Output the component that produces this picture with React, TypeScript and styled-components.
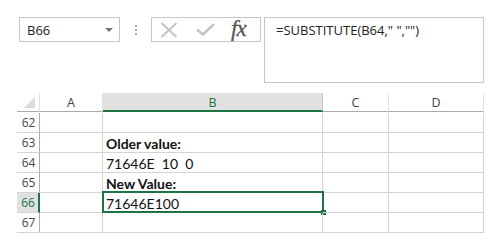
import React from "react";
import styled, { createGlobalStyle } from "styled-components";

const Global = createGlobalStyle`
  html, body { margin: 0; padding: 0; background: #fff; }
  body { width: 497px; height: 245px; overflow: hidden; font-family: "Open Sans", "Noto Sans", sans-serif; }
`;

const Page = styled.div`
  display: flex;
  flex-direction: column;
  padding: 17px 0 0 17px;
`;

const Toolbar = styled.div`
  display: flex;
  align-items: flex-start;
  height: 66px;
`;

const NameBox = styled.div`
  box-sizing: border-box;
  margin-left: 2px;
  width: 101px;
  height: 25px;
  border: 1px solid #c6c6c6;
  display: flex;
  align-items: center;
  justify-content: space-between;
  padding: 0 6px 0 7px;
  font-size: 13px;
  color: #222;
`;

const Arrow = styled.span`
  width: 0;
  height: 0;
  border-left: 4px solid transparent;
  border-right: 4px solid transparent;
  border-top: 4px solid #777;
  margin-top: 1px;
`;

const Dots = styled.div`
  width: 31px;
  height: 25px;
  display: flex;
  flex-direction: column;
  align-items: center;
  justify-content: center;
  gap: 2px;
  & > span {
    width: 2px;
    height: 2px;
    background: #a8a8a8;
  }
`;

const FuncBox = styled.div`
  box-sizing: border-box;
  width: 110px;
  height: 25px;
  border: 1px solid #c6c6c6;
  display: flex;
  align-items: center;
  padding-left: 8px;
  gap: 18px;
`;

const Fx = styled.span`
  font-family: "Liberation Serif", "DejaVu Serif", serif;
  font-style: italic;
  font-size: 23px;
  color: #555;
  letter-spacing: -1px;
  margin-left: -2px;
  line-height: 1;
  margin-top: -3px;
  -webkit-text-stroke: 0.3px #555;
`;

const FormulaBar = styled.div`
  box-sizing: border-box;
  margin-left: 3px;
  width: 220px;
  height: 66px;
  border: 1px solid #c6c6c6;
  padding: 4px 0 0 11px;
  font-size: 13px;
  color: #222;
  line-height: 16px;
`;

const Sheet = styled.div`
  display: grid;
  grid-template-columns: 23px 63px 220px 66px 95px;
  grid-auto-rows: 20px;
  margin-top: 10px;
  width: 467px;
`;

const ColHead = styled.div<{ $sel?: boolean }>`
  box-sizing: border-box;
  height: 19px;
  background: ${(p) => (p.$sel ? "#e1e1e1" : "#fff")};
  border-bottom: ${(p) => (p.$sel ? "2px solid #217346" : "1px solid #ababab")};
  border-right: 1px solid ${(p) => (p.$sel ? "#c6c6c6" : "#e1e1e1")};
  color: ${(p) => (p.$sel ? "#217346" : "#444")};
  font-size: 12.5px;
  display: flex;
  align-items: center;
  justify-content: center;
  position: relative;
  padding-top: 1px;
`;

const Corner = styled.span`
  position: absolute;
  right: 4px;
  bottom: 3px;
  width: 0;
  height: 0;
  border-left: 11px solid transparent;
  border-bottom: 11px solid #dcdcdc;
`;

const RowHead = styled.div<{ $sel?: boolean }>`
  box-sizing: border-box;
  background: ${(p) => (p.$sel ? "#e1e1e1" : "#fff")};
  border-bottom: 1px solid #d4d4d4;
  border-right: ${(p) => (p.$sel ? "2px solid #217346" : "1px solid #ababab")};
  color: ${(p) => (p.$sel ? "#217346" : "#444")};
  font-size: 12px;
  display: flex;
  align-items: center;
  justify-content: center;
  padding-left: 1px;
`;

const Cell = styled.div<{ $bold?: boolean }>`
  box-sizing: border-box;
  border-bottom: 1px solid #d4d4d4;
  border-right: 1px solid #d4d4d4;
  font-family: "Lato", "Liberation Sans", sans-serif;
  font-size: 14px;
  font-weight: ${(p) => (p.$bold ? 700 : 400)};
  color: #111;
  display: flex;
  align-items: center;
  padding-left: 3px;
  padding-top: 1px;
  white-space: pre;
  position: relative;
`;

const Selection = styled.span`
  position: absolute;
  left: -1px;
  top: -2px;
  right: -2px;
  bottom: -1px;
  border: 2px solid #217346;
  pointer-events: none;
  &::after {
    content: "";
    position: absolute;
    right: -4px;
    bottom: -4px;
    width: 5px;
    height: 5px;
    background: #217346;
  }
`;

const rows: { n: number; b?: string; bold?: boolean; sel?: boolean }[] = [
  { n: 62 },
  { n: 63, b: "Older value:", bold: true },
  { n: 64, b: "71646E  10  0" },
  { n: 65, b: "New Value:", bold: true },
  { n: 66, b: "71646E100", sel: true },
  { n: 67 },
];

const XIcon = () => (
  <svg width="18" height="16" viewBox="0 0 18 16">
    <path d="M1.5 1 L16.5 15 M16.5 1 L1.5 15" stroke="#c4c4c4" strokeWidth="2" fill="none" />
  </svg>
);

const CheckIcon = () => (
  <svg width="19" height="13" viewBox="0 0 19 13">
    <path d="M1 6.5 L7 11.5 L18 1" stroke="#c4c4c4" strokeWidth="2.6" fill="none" />
  </svg>
);

export default function App() {
  return (
    <>
      <Global />
      <Page>
        <Toolbar>
          <NameBox>
            <span>B66</span>
            <Arrow />
          </NameBox>
          <Dots>
            <span />
            <span />
            <span />
          </Dots>
          <FuncBox>
            <XIcon />
            <CheckIcon />
            <Fx>fx</Fx>
          </FuncBox>
          <FormulaBar>=SUBSTITUTE(B64," ","")</FormulaBar>
        </Toolbar>
        <Sheet>
          <ColHead>
            <Corner />
          </ColHead>
          <ColHead>A</ColHead>
          <ColHead $sel>B</ColHead>
          <ColHead>C</ColHead>
          <ColHead>D</ColHead>
          {rows.map((r) => (
            <React.Fragment key={r.n}>
              <RowHead $sel={r.sel}>{r.n}</RowHead>
              <Cell />
              <Cell $bold={r.bold}>
                {r.b}
                {r.sel && <Selection />}
              </Cell>
              <Cell />
              <Cell />
            </React.Fragment>
          ))}
        </Sheet>
      </Page>
    </>
  );
}
